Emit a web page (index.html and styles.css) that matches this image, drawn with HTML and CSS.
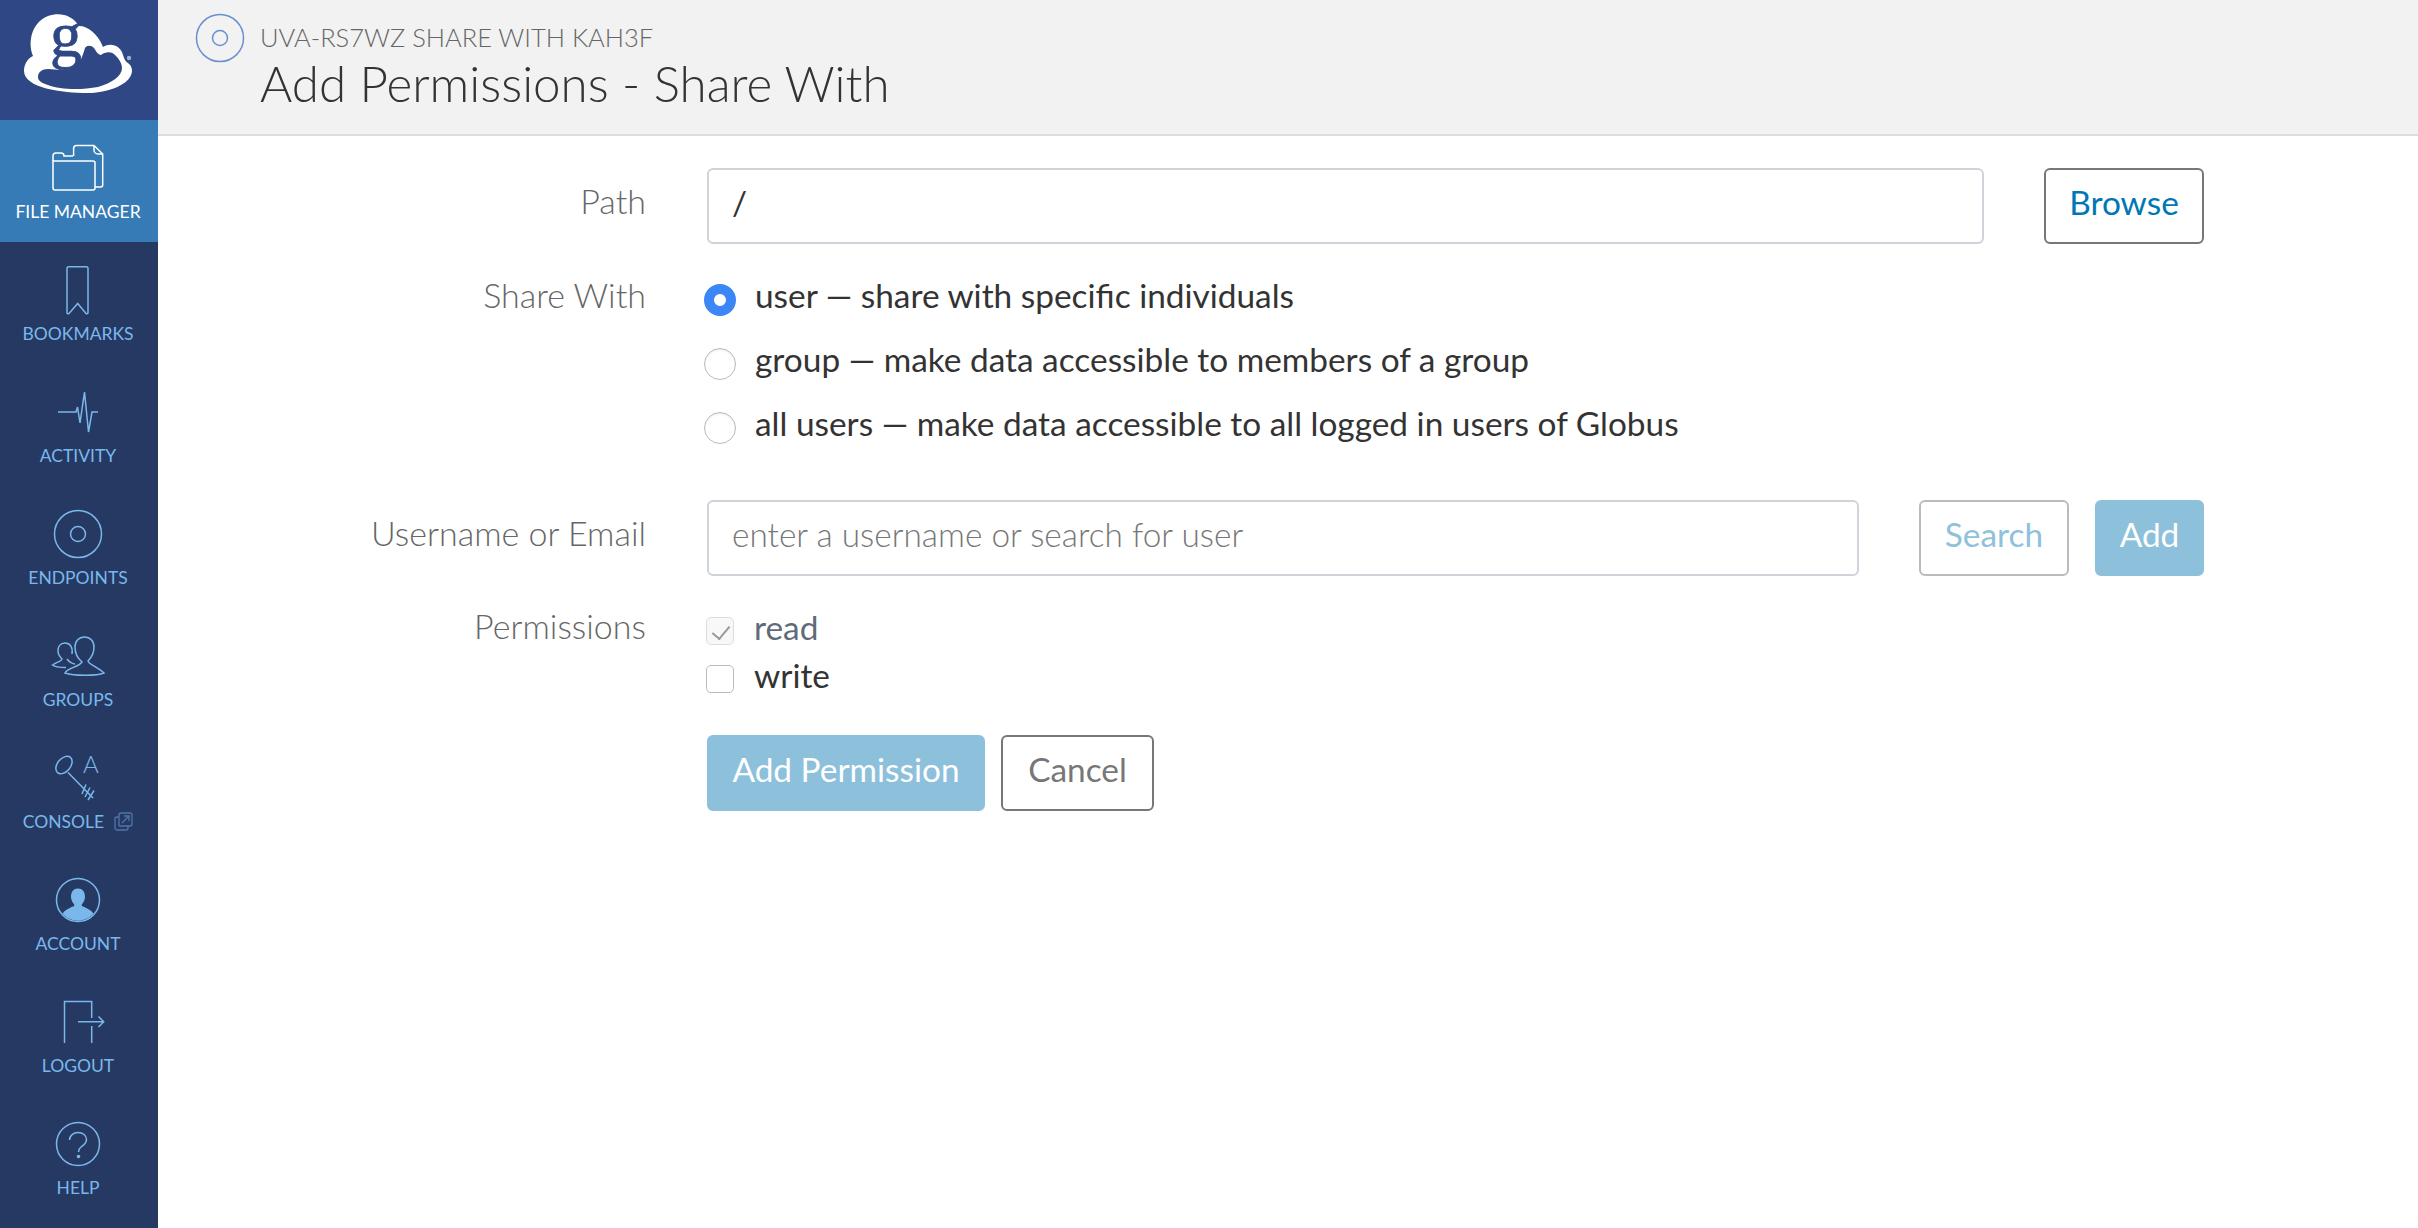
FILE: index.html
```html
<!DOCTYPE html>
<html lang="en">
<head>
    <meta charset="UTF-8">
    <meta name="viewport" content="width=device-width, initial-scale=1.0">
    <title>Add Permissions - Share With</title>
    <link rel="stylesheet" href="styles.css">
</head>
<body>
    <nav class="sidebar">
        <a class="logo" href="#">
            <svg width="158" height="120" viewBox="0 0 158 120">
                <path fill="#fff" d="M24 71C24 64 28 58 33 56C27 40 33 22 48 16C60 12 72 15 79 26C88 26 98 34 103 47C111 42 121 46 123 55C124 59 126 62 128 63C132 66 133 71 131 75C127 86 105 93 88 93C62 93 24 88 24 71Z"/>
                <path fill="#2f4885" d="M38 77C38 72 42 69 48 69C55 69 65 72 74 68C80 64 83 55 85 48C87 45 91 45 94 48C96 51 98 55 101 55C105 52 111 51 115 55C120 60 122 64 122 68C122 76 112 83 98 87C82 90 60 90 48 85C42 83 38 81 38 77Z"/>
                <text class="logo-g" x="50" y="56">g</text>
                <circle cx="129" cy="58" r="2.2" fill="#9fb0cf"/>
            </svg>
        </a>
        <a class="nav-item active" href="#">
            <svg class="nav-icon" viewBox="0 0 60 60">
                <path d="M7 52H45A2 2 0 0 0 47 50V25A2 2 0 0 0 45 23H5V50A2 2 0 0 0 7 52Z"/>
                <path d="M5 23V18A3 3 0 0 1 8 15H13A3 3 0 0 1 16 18H25"/>
                <path d="M25.6 18V10.5A3 3 0 0 1 28.6 7.5H46L54.7 16V47A2 2 0 0 1 52.7 49H47"/>
                <path d="M46 7.5V12A4 4 0 0 0 50 16H54.7"/>
            </svg>
            <span>FILE MANAGER</span>
        </a>
        <a class="nav-item" href="#">
            <svg class="nav-icon" viewBox="0 0 60 60">
                <path d="M19 8A1.5 1.5 0 0 1 20.5 6.7H38.5A1.5 1.5 0 0 1 40 8V52.5A1.2 1.2 0 0 1 38 53.5L29.7 43.5L21 53.5A1.2 1.2 0 0 1 19 52.5Z"/>
            </svg>
            <span>BOOKMARKS</span>
        </a>
        <a class="nav-item" href="#">
            <svg class="nav-icon" viewBox="0 0 60 60">
                <path d="M10 30H28L29.5 25L32 41L36.5 10L40.5 50L44 30H50"/>
            </svg>
            <span>ACTIVITY</span>
        </a>
        <a class="nav-item" href="#">
            <svg class="nav-icon" viewBox="0 0 60 60">
                <circle cx="30" cy="30" r="23.5"/>
                <circle cx="30" cy="30" r="7.5"/>
            </svg>
            <span>ENDPOINTS</span>
        </a>
        <a class="nav-item" href="#">
            <svg class="nav-icon" viewBox="0 0 60 60">
                <path d="M34 36C29 32 27 26 27 21C27 15 31 11 36.5 11C42 11 46 15 46 21C46 27 44 31 40 35C40 38 50 41 56 47C49 50 26 50 17 47C19 42 31 41 34 36Z"/>
                <path d="M24 28C25 21 22 17 17 17C12 17 10 21 10 25C10 29 12 31 14 33C14 35 9 36 4.5 39C7 41 13 41.5 18 41.5M19 33C21 36 25 38 27 38"/>
            </svg>
            <span>GROUPS</span>
        </a>
        <a class="nav-item" href="#">
            <svg class="nav-icon" viewBox="0 0 60 60">
                <ellipse cx="16" cy="17" rx="6.5" ry="10" transform="rotate(40 16 17)"/>
                <path d="M20 24.5L45 50M34 46L38 36.5M37 49L42 39.5M40 52L46 42.5"/>
                <text class="key-letter" x="35" y="25">A</text>
            </svg>
            <span>CONSOLE<svg class="ext-icon" width="19" height="19" viewBox="0 0 19 19"><path d="M5 14V3A2 2 0 0 1 7 1H16A2 2 0 0 1 18 3V12A2 2 0 0 1 16 14H5M14 14V16A2 2 0 0 1 12 18H3A2 2 0 0 1 1 16V7A2 2 0 0 1 3 5H5M8 11L15 4M10 4H15V9"/></svg></span>
        </a>
        <a class="nav-item" href="#">
            <svg class="nav-icon" viewBox="0 0 60 60">
                <circle cx="30" cy="30" r="21.5"/>
                <path class="fill" d="M30 18.5C24.5 18.5 23 23 23 27C23 30 25 33 26.5 35C26.5 37 18 38 14.5 43.5C22 53 38 53 45.5 43.5C42 38 33.5 37 33.5 35C35 33 37 30 37 27C37 23 35.5 18.5 30 18.5Z"/>
            </svg>
            <span>ACCOUNT</span>
        </a>
        <a class="nav-item" href="#">
            <svg class="nav-icon" viewBox="0 0 60 60">
                <path d="M16.5 51V9.5H43.7V26M43.7 34V51M30 29.7H55.7M50.5 24.5L55.7 29.7L50.5 35"/>
            </svg>
            <span>LOGOUT</span>
        </a>
        <a class="nav-item" href="#">
            <svg class="nav-icon" viewBox="0 0 60 60">
                <circle cx="30" cy="30" r="21.5"/>
                <path d="M21.5 26C21.5 21.5 25.5 18.5 30 18.5C35 18.5 38.5 21.5 38.5 25.5C38.5 29.5 35.5 31 33 33C31 34.5 30.5 35.5 30.5 38"/>
                <circle class="fill" cx="30.5" cy="42.5" r="1.8"/>
            </svg>
            <span>HELP</span>
        </a>
    </nav>

    <div class="main">
        <header class="page-header">
            <svg class="header-icon" width="50" height="50" viewBox="0 0 50 50">
                <circle cx="25" cy="25" r="23.5"/>
                <circle cx="25" cy="25" r="7.5"/>
            </svg>
            <div class="header-text">
                <div class="subtitle">UVA-RS7WZ SHARE WITH KAH3F</div>
                <h1>Add Permissions - Share With</h1>
            </div>
        </header>

        <form class="perm-form">
            <div class="form-row row-path">
                <label class="field-label">Path</label>
                <input class="text-input" type="text" value="/">
                <button class="btn btn-browse" type="button">Browse</button>
            </div>

            <div class="form-row row-share">
                <label class="field-label">Share With</label>
                <div class="options">
                    <label class="option"><input class="radio" type="radio" name="share" checked> <span class="option-text">user — share with specific individuals</span></label>
                    <label class="option"><input class="radio" type="radio" name="share"> <span class="option-text">group — make data accessible to members of a group</span></label>
                    <label class="option"><input class="radio" type="radio" name="share"> <span class="option-text">all users — make data accessible to all logged in users of Globus</span></label>
                </div>
            </div>

            <div class="form-row row-user">
                <label class="field-label">Username or Email</label>
                <input class="text-input" type="text" placeholder="enter a username or search for user">
                <button class="btn btn-search" type="button">Search</button>
                <button class="btn btn-primary btn-add" type="button">Add</button>
            </div>

            <div class="form-row row-perms">
                <label class="field-label">Permissions</label>
                <div class="checks">
                    <label class="check is-disabled"><input class="checkbox" type="checkbox" checked disabled> <span class="check-text">read</span></label>
                    <label class="check"><input class="checkbox" type="checkbox"> <span class="check-text">write</span></label>
                </div>
            </div>

            <div class="form-row row-actions">
                <button class="btn btn-primary btn-submit" type="button">Add Permission</button>
                <button class="btn btn-cancel" type="button">Cancel</button>
            </div>
        </form>
    </div>
</body>
</html>
```

FILE: styles.css
```css
* {
    box-sizing: border-box;
}

html, body {
    height: 100%;
}

body {
    margin: 0;
    display: flex;
    font-family: Lato, "Open Sans", sans-serif;
    font-size: 33.4px;
    color: #333;
    background-color: #fff;
    overflow: hidden;
}

/* left navigation */
.sidebar {
    width: 158px;
    flex-shrink: 0;
    background-color: #263963;
}

.logo {
    display: block;
    height: 120px;
    background-color: #2f4885;
}

.logo svg {
    display: block;
}

.logo-g {
    font-family: "Liberation Serif", serif;
    font-size: 64px;
    fill: #2f4885;
    stroke: #2f4885;
    stroke-width: 0.8;
}

.nav-item {
    display: flex;
    flex-direction: column;
    align-items: center;
    height: 122px;
    padding: 18px 2px 0 0;
    color: #7ab8ec;
    text-decoration: none;
    font-size: 17.5px;
    line-height: 28px;
}

.nav-item.active {
    background-color: #367ab6;
    color: #fff;
}

.nav-icon {
    width: 60px;
    height: 60px;
    flex-shrink: 0;
    fill: none;
    stroke: currentColor;
    stroke-width: 1.5;
}

.nav-icon .fill {
    fill: currentColor;
    stroke: none;
}

.key-letter {
    font-size: 24px;
    font-weight: 300;
    fill: currentColor;
    stroke: none;
}

.ext-icon {
    margin-left: 10px;
    vertical-align: -3px;
    fill: none;
    stroke: #4f76a8;
    stroke-width: 1.3;
}

/* page title */
.main {
    flex: 1;
    min-width: 0;
}

.page-header {
    display: flex;
    height: 136px;
    padding: 13px 0 0 37px;
    gap: 15px;
    background-color: #f2f2f2;
    border-bottom: 2px solid #ddd;
}

.header-icon {
    flex-shrink: 0;
    fill: none;
    stroke: #6a8fd0;
    stroke-width: 1.5;
}

.header-text {
    padding-top: 6px;
}

.subtitle {
    font-size: 25.5px;
    line-height: 36px;
    font-weight: 300;
    color: #666;
}

.page-header h1 {
    margin: 0;
    font-size: 49.3px;
    line-height: 56px;
    font-weight: 300;
    color: #333;
}

/* form */
.perm-form {
    padding: 32px 214px 0 0;
}

.form-row {
    display: flex;
    align-items: flex-start;
}

.field-label {
    width: 488px;
    margin-right: 61px;
    flex-shrink: 0;
    text-align: right;
    font-size: 34px;
    line-height: 66px;
    font-weight: 300;
    color: #666;
}

.text-input {
    flex: 1;
    min-width: 0;
    height: 76px;
    padding: 0 23px 8px;
    border: 2px solid #ced4da;
    border-radius: 6px;
    font-family: inherit;
    font-size: 33.4px;
    color: #333;
    background-color: #fff;
}

.text-input::placeholder {
    color: #777;
    font-weight: 300;
}

.btn {
    height: 76px;
    padding: 0 0 8px;
    border: 2px solid #777;
    border-radius: 6px;
    background-color: #fff;
    font-family: inherit;
    font-size: 33.4px;
    color: #777;
}

.btn-browse {
    width: 160px;
    margin-left: 60px;
    color: #0077b5;
}

.btn-search {
    width: 150px;
    margin-left: 60px;
    border-color: #bbb;
    color: #8fc1dc;
}

.btn-primary {
    border-color: #8dc0db;
    background-color: #8dc0db;
    color: #fff;
}

.btn-add {
    width: 109px;
    margin-left: 26px;
}

.row-share {
    margin-top: 24px;
}

.row-share .field-label {
    line-height: 54px;
}

.options {
    display: flex;
    flex-direction: column;
    margin-left: -3px;
}

.option {
    display: flex;
    align-items: center;
    height: 64px;
    gap: 19px;
}

.option-text {
    padding-bottom: 10px;
}

.radio {
    appearance: none;
    width: 32px;
    height: 32px;
    margin: 0;
    flex-shrink: 0;
    border: 1px solid #bbb;
    border-radius: 50%;
    background-color: #fff;
    box-shadow: inset 0 1px 2px rgba(0, 0, 0, 0.1);
}

.radio:checked {
    border: 10.5px solid #3b87f7;
    box-shadow: none;
}

.row-user {
    margin-top: 40px;
}

.row-perms {
    margin-top: 31px;
}

.row-perms .field-label {
    line-height: 38px;
}

.checks {
    display: flex;
    flex-direction: column;
    margin-left: -1px;
}

.check {
    display: flex;
    align-items: center;
    height: 48px;
    gap: 20px;
}

.check-text {
    padding-bottom: 8px;
}

.check.is-disabled {
    color: #5f6b7a;
}

.checkbox {
    appearance: none;
    width: 28px;
    height: 28px;
    margin: 0;
    flex-shrink: 0;
    border: 1px solid #bbb;
    border-radius: 5px;
    background-color: #fff;
    position: relative;
}

.checkbox:disabled {
    border-color: #ddd;
    background-color: #f8f8f8;
}

.checkbox:checked::after {
    content: "";
    position: absolute;
    left: 9px;
    top: 4px;
    width: 8px;
    height: 15px;
    border: solid #999;
    border-width: 0 2.5px 2.5px 0;
    transform: rotate(40deg);
}

.row-actions {
    margin-top: 32px;
    padding-left: 549px;
    gap: 16px;
}

.btn-submit {
    width: 278px;
}

.btn-cancel {
    width: 153px;
}
```
